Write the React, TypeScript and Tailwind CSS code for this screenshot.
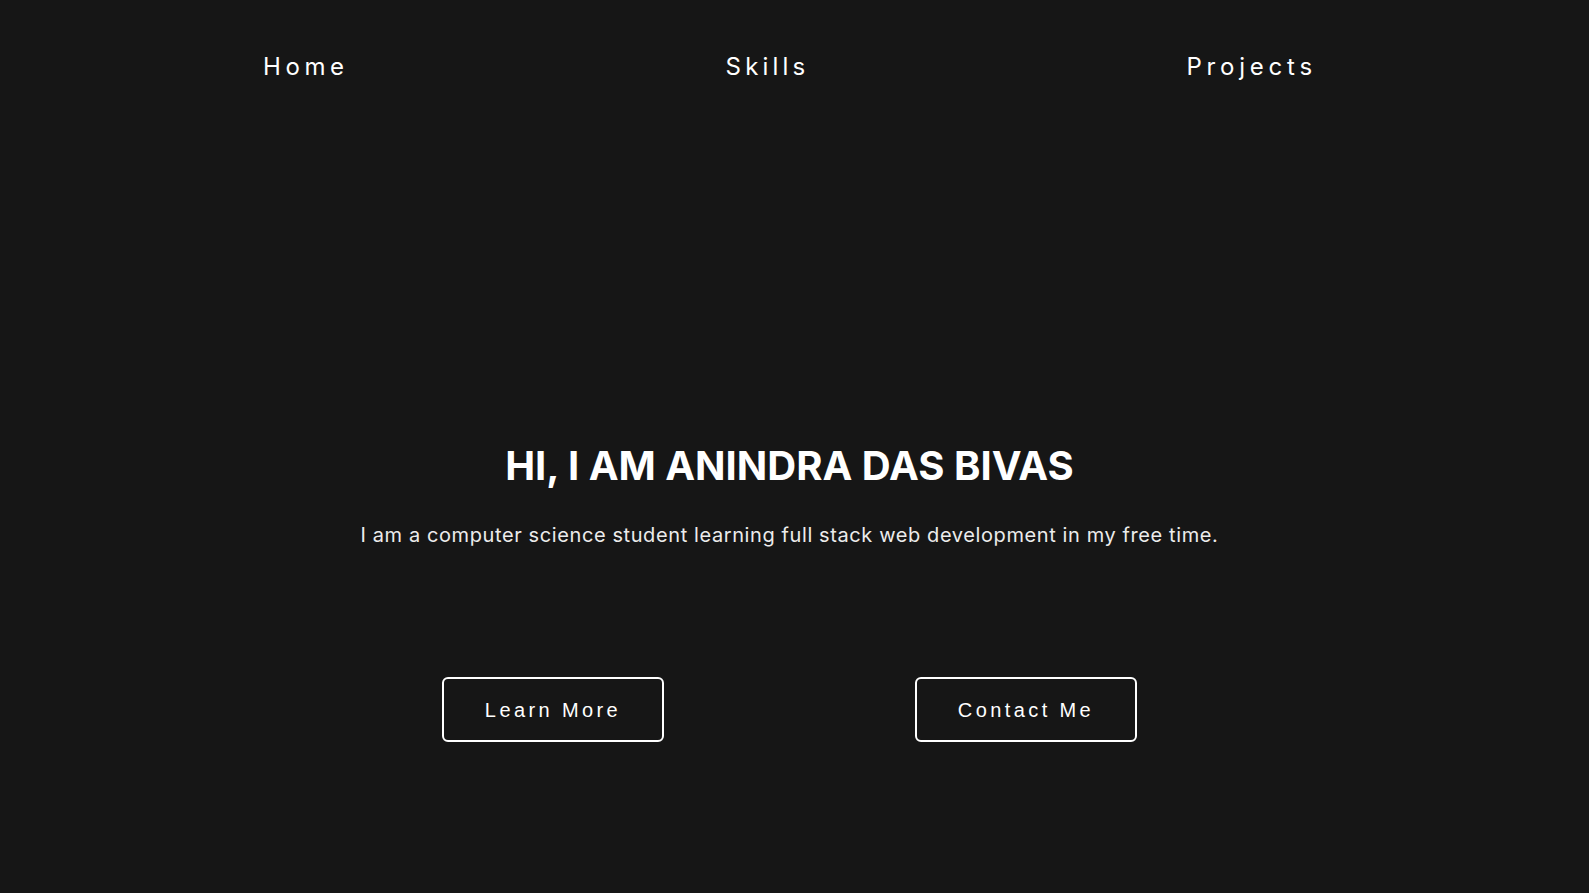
const App = () => {
  return (
    <div className="min-h-screen bg-[#161616] text-white pr-[10px] font-['Inter','Open_Sans',sans-serif]">
      <nav className="flex justify-between items-center pt-[49px] pl-[263px] pr-[262px]">
        <a className="text-[24px] leading-[36px] tracking-[4.6px]">Home</a>
        <a className="text-[24px] leading-[36px] tracking-[4.2px]">Skills</a>
        <a className="text-[24px] leading-[36px] tracking-[4.8px]">Projects</a>
      </nav>

      <section className="flex flex-col items-center mt-[357px]">
        <h1 className="text-[40px] leading-[48px] font-bold">HI, I AM ANINDRA DAS BIVAS</h1>
        <p className="mt-[30px] text-[20px] leading-[30px] tracking-[0.6px] text-[#ececec]">
          I am a computer science student learning full stack web development in my free time.
        </p>
        <div className="flex justify-center gap-[251px] mt-[127px]">
          <button className="w-[222px] h-[65px] border-2 border-white rounded-md font-['Liberation_Sans',Arial,sans-serif] text-[20px] tracking-[3.4px]">
            Learn More
          </button>
          <button className="w-[222px] h-[65px] border-2 border-white rounded-md font-['Liberation_Sans',Arial,sans-serif] text-[20px] tracking-[3.4px]">
            Contact Me
          </button>
        </div>
      </section>
    </div>
  );
};

export default App;
